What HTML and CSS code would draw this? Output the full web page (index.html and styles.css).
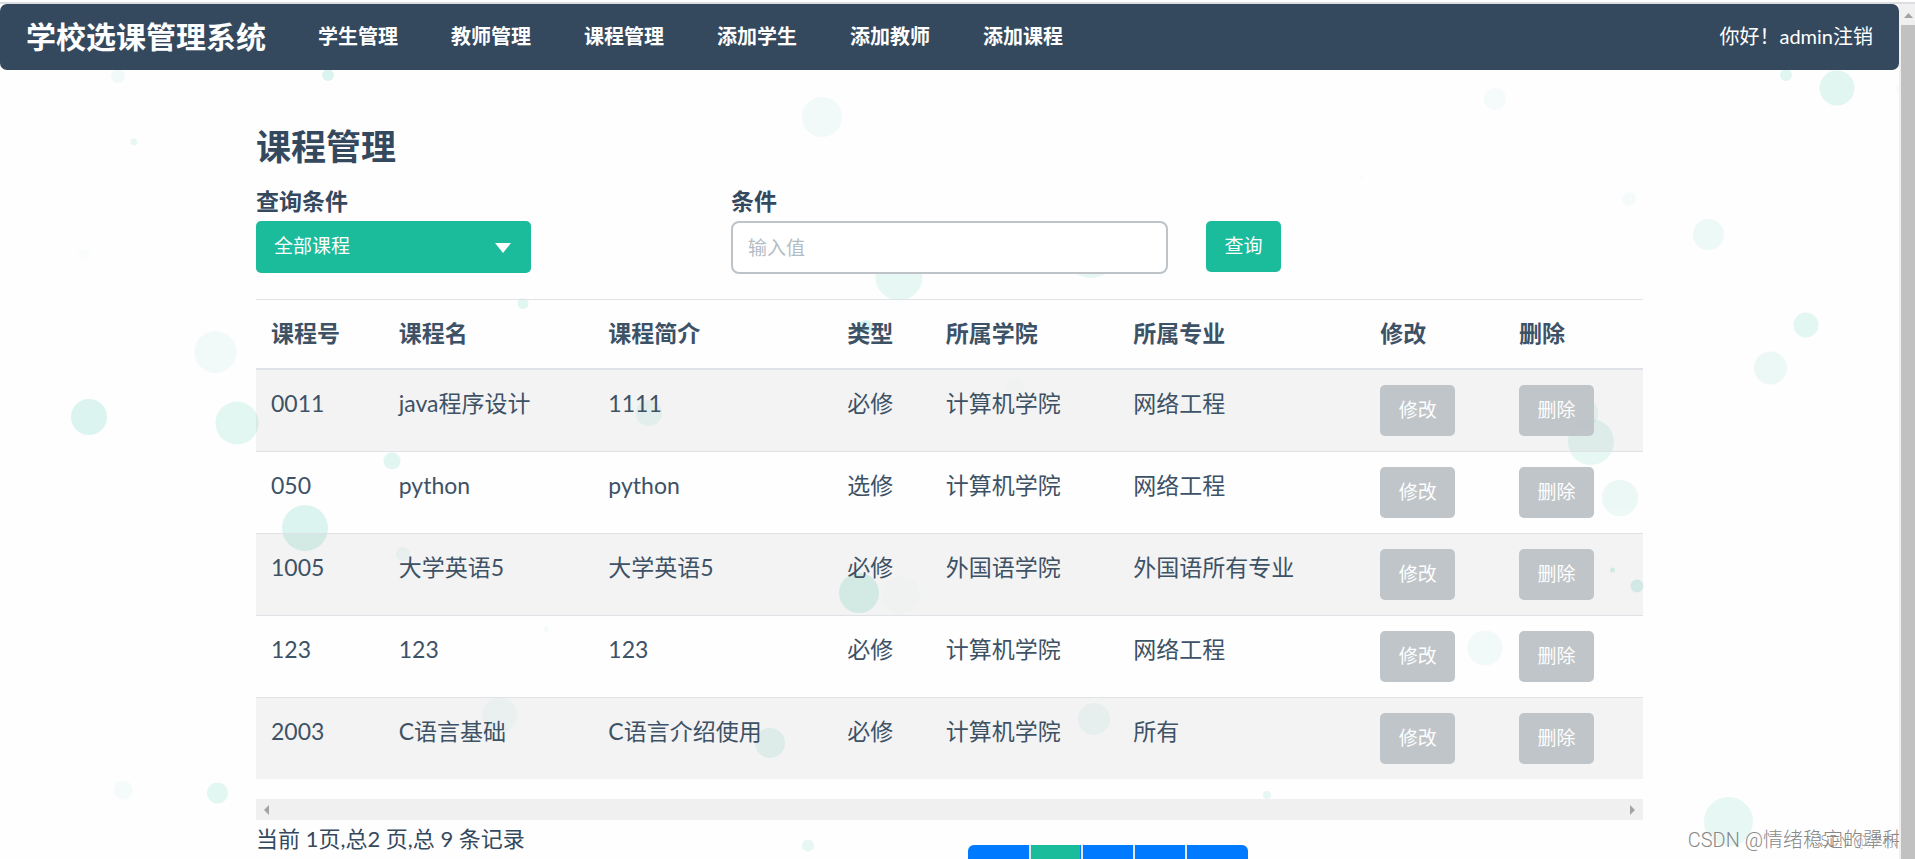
FILE: index.html
```html
<!DOCTYPE html>
<html lang="zh-CN">
<head>
<meta charset="utf-8">
<title>学校选课管理系统</title>
<link rel="stylesheet" href="styles.css">
</head>
<body>
<div class="frame">
  <div class="viewport">
    <svg class="bubbles" width="1899" height="855" viewBox="0 4 1899 855" fill="#1abc9c" aria-hidden="true">
      <g opacity=".02"><circle cx="84" cy="255" r="6"/><circle cx="1015" cy="386" r="9"/><circle cx="901" cy="595" r="19"/><circle cx="1361" cy="178" r="2.5"/></g>
      <g opacity=".04"><circle cx="1495" cy="99" r="11"/><circle cx="1629" cy="199" r="7"/><circle cx="123" cy="790" r="9.5"/><circle cx="546" cy="629.5" r="2.5"/><circle cx="499.5" cy="715" r="17.5"/><circle cx="1899" cy="89" r="3"/></g>
      <g opacity=".06"><circle cx="118" cy="76" r="7"/><circle cx="822" cy="117" r="20"/><circle cx="215.5" cy="352" r="21"/><circle cx="1485" cy="648" r="17.5"/><circle cx="1094" cy="719" r="16"/><circle cx="403" cy="554" r="7"/></g>
      <g opacity=".08"><circle cx="1708.5" cy="234.5" r="15.5"/><circle cx="1770.5" cy="368" r="16.5"/><circle cx="1620" cy="498" r="18"/><circle cx="1582" cy="413" r="16"/><circle cx="649" cy="413" r="13"/></g>
      <g opacity=".1"><circle cx="134" cy="142" r="3.5"/><circle cx="899" cy="277" r="23.5"/><circle cx="1091" cy="252" r="26"/><circle cx="1591" cy="442" r="23"/><circle cx="1728.5" cy="821.5" r="24.5"/><circle cx="1267" cy="795" r="4"/><circle cx="808" cy="845.5" r="6"/><circle cx="770" cy="743" r="15"/></g>
      <g opacity=".12"><circle cx="1786" cy="75" r="6"/><circle cx="1837" cy="88" r="17.5"/><circle cx="237" cy="423" r="21.5"/><circle cx="392" cy="461" r="8.5"/><circle cx="1806" cy="325" r="12.5"/><circle cx="217.5" cy="793" r="10.5"/><circle cx="523" cy="303.5" r="5.5"/></g>
      <g opacity=".15"><circle cx="328" cy="75" r="6"/><circle cx="89" cy="417" r="18"/><circle cx="305" cy="528" r="23"/><circle cx="866" cy="327" r="7"/><circle cx="1612.5" cy="570" r="2.5"/><circle cx="1637" cy="586" r="6.5"/><circle cx="859" cy="593" r="20"/></g>
    </svg>

    <nav class="navbar">
      <a class="brand" href="#">学校选课管理系统</a>
      <div class="nav-links">
        <a href="#">学生管理</a>
        <a href="#">教师管理</a>
        <a href="#">课程管理</a>
        <a href="#">添加学生</a>
        <a href="#">添加教师</a>
        <a href="#">添加课程</a>
      </div>
      <div class="account">你好！admin<a href="#">注销</a></div>
    </nav>

    <main class="content">
      <h1>课程管理</h1>
      <form class="search">
        <div class="field">
          <label for="scope">查询条件</label>
          <div class="select-wrap">
            <select id="scope"><option>全部课程</option></select>
            <svg class="caret" width="16" height="10" viewBox="0 0 16 10" aria-hidden="true"><path d="M0 0h16L8 10z" fill="#fff"/></svg>
          </div>
        </div>
        <div class="field">
          <label for="term">条件</label>
          <input id="term" type="text" placeholder="输入值">
        </div>
        <button class="btn btn-primary" type="button">查询</button>
      </form>

      <table class="courses">
        <colgroup>
          <col class="c-id"><col class="c-name"><col class="c-intro"><col class="c-type"><col class="c-college"><col class="c-major"><col class="c-action"><col class="c-action">
        </colgroup>
        <thead>
          <tr><th>课程号</th><th>课程名</th><th>课程简介</th><th>类型</th><th>所属学院</th><th>所属专业</th><th>修改</th><th>删除</th></tr>
        </thead>
        <tbody>
          <tr><td>0011</td><td>java程序设计</td><td>1111</td><td>必修</td><td>计算机学院</td><td>网络工程</td><td><button class="btn" type="button">修改</button></td><td><button class="btn" type="button">删除</button></td></tr>
          <tr><td>050</td><td>python</td><td>python</td><td>选修</td><td>计算机学院</td><td>网络工程</td><td><button class="btn" type="button">修改</button></td><td><button class="btn" type="button">删除</button></td></tr>
          <tr><td>1005</td><td>大学英语5</td><td>大学英语5</td><td>必修</td><td>外国语学院</td><td>外国语所有专业</td><td><button class="btn" type="button">修改</button></td><td><button class="btn" type="button">删除</button></td></tr>
          <tr><td>123</td><td>123</td><td>123</td><td>必修</td><td>计算机学院</td><td>网络工程</td><td><button class="btn" type="button">修改</button></td><td><button class="btn" type="button">删除</button></td></tr>
          <tr><td>2003</td><td>C语言基础</td><td>C语言介绍使用</td><td>必修</td><td>计算机学院</td><td>所有</td><td><button class="btn" type="button">修改</button></td><td><button class="btn" type="button">删除</button></td></tr>
        </tbody>
      </table>

      <div class="hscroll" aria-hidden="true">
        <svg width="5" height="10" viewBox="0 0 5 10"><path d="M5 0v10L0 5z" fill="#a3a3a3"/></svg>
        <svg width="5" height="10" viewBox="0 0 5 10"><path d="M0 0v10L5 5z" fill="#a3a3a3"/></svg>
      </div>

      <div class="summary">
        <p>当前 1页,总2 页,总 9 条记录</p>
        <div class="pager">
          <a href="#" class="end" aria-label="上一页"></a>
          <a href="#" class="current" aria-label="第 1 页"></a>
          <a href="#" aria-label="第 2 页"></a>
          <a href="#" aria-label="第 3 页"></a>
          <a href="#" class="end" aria-label="下一页"></a>
        </div>
      </div>
    </main>

    <div class="mark mark-small">CSDN @汐栎</div>
    <div class="mark">CSDN @情绪稳定的犟种</div>
  </div>
  <div class="vscroll" aria-hidden="true">
    <svg width="9" height="5" viewBox="0 0 9 5"><path d="M0 5h9L4.500 0z" fill="#a3a3a3"/></svg>
    <div class="thumb"></div>
  </div>
</div>
</body>
</html>
```
FILE: styles.css
```css
* { box-sizing: border-box; }

body {
  margin: 0;
  height: 100vh;
  overflow: hidden;
  background: #fefefe;
  color: #34495e;
  font-family: Lato, "Noto Sans CJK SC", sans-serif;
  font-size: 23px;
  line-height: 38px;
}

a { color: inherit; text-decoration: none; }

.frame {
  display: grid;
  grid-template-columns: minmax(0, 1fr) 16px;
  height: 100vh;
  padding-top: 4px;
  background: linear-gradient(#fefefe 2px, #dcdee2 2px, #dcdee2 4px, #fefefe 4px);
}

.viewport {
  position: relative;
  overflow: hidden;
  isolation: isolate;
}

.bubbles {
  position: absolute;
  left: 0;
  top: 0;
  z-index: -1;
}

.navbar {
  display: flex;
  align-items: center;
  height: 66px;
  padding: 0 26px 2px;
  border-radius: 7px;
  background: #34495e;
  color: #fff;
  font-size: 20px;
}

.brand { font-size: 30px; font-weight: 700; }

.nav-links {
  display: flex;
  gap: 53px;
  margin-left: 52px;
  font-weight: 700;
}

.account { margin-left: auto; }

.content { padding: 56px 256px 0; }

h1 {
  margin: 0 0 16px;
  font-size: 35px;
  line-height: 40px;
}

.search {
  display: grid;
  grid-template-columns: repeat(3, 1fr);
  gap: 38px;
  align-items: start;
}

.field { display: flex; flex-direction: column; }

.field label { padding-bottom: 1px; font-weight: 700; }

.select-wrap { position: relative; width: 275px; }

select,
input,
.btn {
  font-family: inherit;
  font-size: 19px;
  line-height: 24px;
}

select {
  appearance: none;
  display: block;
  width: 100%;
  height: 52px;
  padding: 0 18px 2px;
  border: 0;
  border-radius: 5px;
  background: #1abc9c;
  color: #fff;
}

.caret {
  position: absolute;
  right: 20px;
  top: 22px;
  pointer-events: none;
}

input {
  height: 53px;
  padding: 0 15px;
  border: 2px solid #bdc3c7;
  border-radius: 8px;
  background: #fff;
  color: #34495e;
}

input::placeholder { color: #b2bcc5; opacity: 1; }

.btn {
  display: block;
  width: 75px;
  height: 51px;
  padding: 0 0 2px;
  border: 0;
  border-radius: 5px;
  background: #bdc3c7;
  color: #fff;
}

.btn-primary { margin-top: 39px; background: #1abc9c; }

.courses {
  width: 100%;
  margin-top: 25px;
  table-layout: fixed;
  border-collapse: separate;
  border-spacing: 0;
  opacity: .95;
}

.c-id { width: 9.2%; }
.c-name { width: 15.1%; }
.c-intro { width: 17.2%; }
.c-type { width: 7.1%; }
.c-college { width: 13.5%; }
.c-major { width: 17.8%; }
.c-action { width: 10%; }

th,
td {
  padding: 14px 15px 15px;
  border-top: 1px solid #dee2e6;
  text-align: left;
  vertical-align: top;
  white-space: nowrap;
}

th { padding-bottom: 16px; border-bottom: 2px solid #dee2e6; }

td .btn { margin-top: 1px; }

tbody tr:first-child td { border-top: 0; }
tbody tr:nth-child(odd) { background: rgba(0, 0, 0, .045); }

.hscroll {
  display: flex;
  align-items: center;
  justify-content: space-between;
  height: 21px;
  margin-top: 20px;
  padding: 0 8px;
  background: #f0f0f0;
}

.summary {
  display: grid;
  grid-template-columns: 712px auto;
  justify-content: start;
}

.summary p { margin: 0; font-size: 22px; }

.pager {
  display: flex;
  gap: 2px;
  height: 50px;
  margin-top: 25px;
  overflow: hidden;
  border-radius: 6px;
  background: #e1e7ec;
}

.pager a { width: 50px; background: #007bff; }
.pager .end { width: 61px; }
.pager .current { background: #1abc9c; border-right: 1px solid #007bff; }

.mark {
  position: absolute;
  right: -4px;
  bottom: 4px;
  color: #888;
  font-family: Roboto, "Noto Sans CJK SC", sans-serif;
  font-size: 20px;
  font-weight: 300;
  line-height: 30px;
  text-shadow: 1px 1px 0 #fff;
  white-space: nowrap;
}

.mark-small { right: 2px; bottom: 3px; font-size: 15px; }

.vscroll {
  display: flex;
  flex-direction: column;
  align-items: center;
  padding: 9px 0 0 2px;
  background: #f0f0f0;
}

.thumb {
  flex: 1;
  width: 100%;
  margin-top: 7px;
  background: #c1c1c1;
}
```
